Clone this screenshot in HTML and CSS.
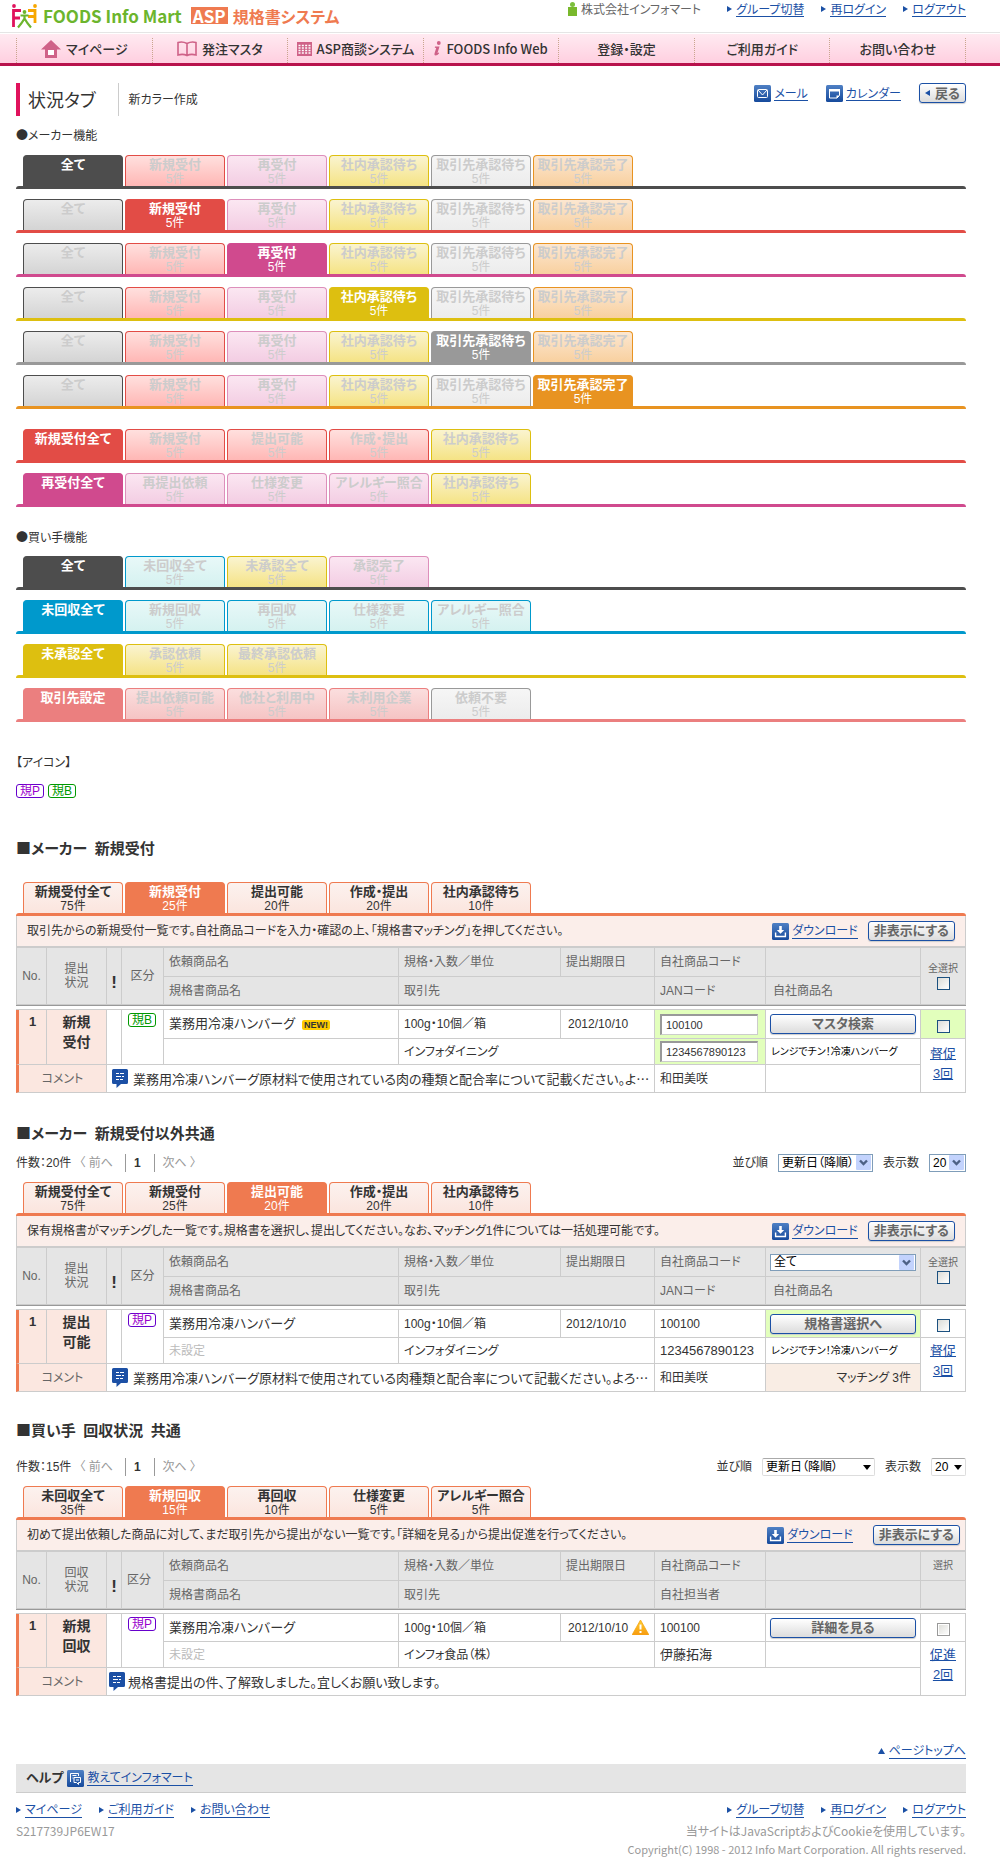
FILE: index.html
```
<!DOCTYPE html>
<html lang="ja">
<head>
<meta charset="utf-8">
<meta name="viewport" content="width=device-width, initial-scale=1">
<title>状況タブ | FOODS Info Mart ASP規格書システム</title>
<link rel="stylesheet" href="styles.css">
</head>
<body>
<svg class="defs" width="0" height="0" aria-hidden="true">
  <defs>
    <linearGradient id="blue" x1="0" y1="0" x2="0" y2="1"><stop offset="0" stop-color="#4f80c4"/><stop offset="1" stop-color="#164a9c"/></linearGradient>
    <linearGradient id="amber" x1="0" y1="0" x2="0" y2="1"><stop offset="0" stop-color="#ffd02e"/><stop offset="1" stop-color="#f79a10"/></linearGradient>
    <symbol id="i-download" viewBox="0 0 17 17"><rect width="17" height="17" rx="1.5" fill="url(#blue)"/><path d="M7.2 3h2.6v4h2.4L8.5 10.8 4.8 7h2.4z" fill="#fff"/><path d="M3.6 9.5v4h9.800v-4" fill="none" stroke="#fff" stroke-width="1.4"/></symbol>
    <symbol id="i-comment" viewBox="0 0 16 19"><path d="M0 1.500Q0 0 1.500 0h13Q16 0 16 1.500v12Q16 15 14.500 15H9l-4.500 4V15h-3Q0 15 0 13.500z" fill="#1c50a5"/><path d="M4 4.500h3M8 4.500h4M4 7.500h5M10 7.500h2M4 10.500h3M8 10.500h3" stroke="#fff"/></symbol>
    <symbol id="i-arrow" viewBox="0 0 5 6"><path d="M0 0l5 3-5 3z" fill="#1b50a5"/></symbol>
    <symbol id="i-chevron" viewBox="0 0 15 15"><rect width="15" height="15" rx="1" fill="#c3d3fd"/><path d="M4 5.500l3.500 3.500L11 5.500" fill="none" stroke="#4d6185" stroke-width="2.400"/></symbol>
    <symbol id="i-caret" viewBox="0 0 15 15"><path d="M5 6h8l-4 5z" fill="#000"/></symbol>
  </defs>
</svg>

<header class="site-header">
  <a class="logo" href="#">
    <svg width="27" height="26" viewBox="0 0 27 26" aria-hidden="true">
      <g fill="none" stroke-width="2.800">
        <path d="M10 7.500H2.500V24M2.500 15H9" stroke="#e0125c"/>
        <path d="M17 7.500h7V20M24 13.500h-7" stroke="#f7a700"/>
        <path d="M13.500 13v3.500M13.500 15.500Q11 20 7 24.500M13.500 15.500Q16 20 20 24.500M9.500 12.500h8" stroke="#6cb52d" stroke-width="2.200"/>
      </g>
      <circle cx="3" cy="3" r="1.900" fill="#e0125c"/><circle cx="24" cy="3" r="1.900" fill="#f7a700"/><circle cx="13.500" cy="9" r="1.900" fill="#6cb52d"/>
    </svg>
    <span class="logo-name">FOODS Info Mart</span>
    <span class="logo-asp">ASP</span>
    <span class="logo-system">規格書システム</span>
  </a>
  <div class="account">
    <span class="company"><svg width="9" height="14" viewBox="0 0 9 14" aria-hidden="true"><circle cx="4.500" cy="2.500" r="2.500" fill="#7cbf3c"/><path d="M0 5h9v9H0z" fill="#79b82c"/></svg>株式会社インフォマート</span>
    <a class="arrow-link" href="#"><svg width="5" height="6"><use href="#i-arrow"/></svg><span>グループ切替</span></a>
    <a class="arrow-link" href="#"><svg width="5" height="6"><use href="#i-arrow"/></svg><span>再ログイン</span></a>
    <a class="arrow-link" href="#"><svg width="5" height="6"><use href="#i-arrow"/></svg><span>ログアウト</span></a>
  </div>
</header>

<nav class="global-nav">
  <a href="#"><svg width="20" height="18" viewBox="0 0 20 18" aria-hidden="true"><path d="M10 0l10 9.500h-4V18H4V9.500H0z" fill="#cf6288"/><path d="M7 10h6v5H7z" fill="#fff"/></svg>マイページ</a>
  <a href="#"><svg width="20" height="16" viewBox="0 0 20 16" aria-hidden="true"><path d="M10 2.500Q5.500 0 1 1.500v12.500Q6 12.500 10 14.500 14 12.500 19 14V1.500Q14.500 0 10 2.500zV14.500" fill="none" stroke="#cf6288" stroke-width="1.600"/></svg>発注マスタ</a>
  <a href="#"><svg width="15" height="14" viewBox="0 0 15 14" aria-hidden="true"><path d="M0 0h15v14H0z" fill="#cf6288"/><path d="M1.500 3.500h12M1.500 6h12M1.500 8.500h12M1.500 11h12" stroke="#fff" stroke-width="1.500" stroke-dasharray="2 1.330"/></svg>ASP商談システム</a>
  <a href="#"><svg width="7" height="15" viewBox="0 0 7 15" aria-hidden="true"><circle cx="4.800" cy="2" r="1.900" fill="#cf6288"/><path d="M1 5.500h4.500L3.500 12l1.500-.5v1Q3.500 14.500 1.500 14.500 0 14.500.5 12.500L2.200 7 .8 6.800z" fill="#cf6288"/></svg>FOODS Info Web</a>
  <a href="#">登録・設定</a>
  <a href="#">ご利用ガイド</a>
  <a href="#">お問い合わせ</a>
</nav>

<main>
  <div class="page-title">
    <h1>状況タブ</h1>
    <p>新カラー作成</p>
    <div class="tools">
      <a class="icon-link" href="#"><svg width="17" height="17" viewBox="0 0 17 17" aria-hidden="true"><rect width="17" height="17" rx="1.500" fill="url(#blue)"/><rect x="3.500" y="4.500" width="10" height="8" rx="1" fill="none" stroke="#fff"/><path d="M4 5l4.500 5L13 5" fill="none" stroke="#fff"/></svg><span>メール</span></a>
      <a class="icon-link" href="#"><svg width="17" height="17" viewBox="0 0 17 17" aria-hidden="true"><rect width="17" height="17" rx="1.500" fill="url(#blue)"/><path d="M3.500 4.500h10v6l-2.500 2.500H3.500z" fill="none" stroke="#fff"/><path d="M3 4h11v2.500H3zM10.500 10.500h3l-3 3z" fill="#fff"/></svg><span>カレンダー</span></a>
      <button class="btn btn-back" type="button"><svg width="5" height="6" viewBox="0 0 5 6" aria-hidden="true"><path d="M5 0L0 3l5 3z" fill="#1b50a5"/></svg>戻る</button>
    </div>
  </div>

  <p class="label">●メーカー機能</p>
  <div class="tab-group">
    <div class="tabs dark"><a class="tab dark on" href="#"><b>全て</b></a><a class="tab red" href="#"><b>新規受付</b>5件</a><a class="tab pink" href="#"><b>再受付</b>5件</a><a class="tab gold" href="#"><b>社内承認待ち</b>5件</a><a class="tab grey" href="#"><b>取引先承認待ち</b>5件</a><a class="tab orange" href="#"><b>取引先承認完了</b>5件</a></div>
    <div class="tabs red"><a class="tab dark" href="#"><b>全て</b></a><a class="tab red on" href="#"><b>新規受付</b>5件</a><a class="tab pink" href="#"><b>再受付</b>5件</a><a class="tab gold" href="#"><b>社内承認待ち</b>5件</a><a class="tab grey" href="#"><b>取引先承認待ち</b>5件</a><a class="tab orange" href="#"><b>取引先承認完了</b>5件</a></div>
    <div class="tabs pink"><a class="tab dark" href="#"><b>全て</b></a><a class="tab red" href="#"><b>新規受付</b>5件</a><a class="tab pink on" href="#"><b>再受付</b>5件</a><a class="tab gold" href="#"><b>社内承認待ち</b>5件</a><a class="tab grey" href="#"><b>取引先承認待ち</b>5件</a><a class="tab orange" href="#"><b>取引先承認完了</b>5件</a></div>
    <div class="tabs gold"><a class="tab dark" href="#"><b>全て</b></a><a class="tab red" href="#"><b>新規受付</b>5件</a><a class="tab pink" href="#"><b>再受付</b>5件</a><a class="tab gold on" href="#"><b>社内承認待ち</b>5件</a><a class="tab grey" href="#"><b>取引先承認待ち</b>5件</a><a class="tab orange" href="#"><b>取引先承認完了</b>5件</a></div>
    <div class="tabs grey"><a class="tab dark" href="#"><b>全て</b></a><a class="tab red" href="#"><b>新規受付</b>5件</a><a class="tab pink" href="#"><b>再受付</b>5件</a><a class="tab gold" href="#"><b>社内承認待ち</b>5件</a><a class="tab grey on" href="#"><b>取引先承認待ち</b>5件</a><a class="tab orange" href="#"><b>取引先承認完了</b>5件</a></div>
    <div class="tabs orange"><a class="tab dark" href="#"><b>全て</b></a><a class="tab red" href="#"><b>新規受付</b>5件</a><a class="tab pink" href="#"><b>再受付</b>5件</a><a class="tab gold" href="#"><b>社内承認待ち</b>5件</a><a class="tab grey" href="#"><b>取引先承認待ち</b>5件</a><a class="tab orange on" href="#"><b>取引先承認完了</b>5件</a></div>
  </div>
  <div class="tab-group sub-group">
    <div class="tabs red"><a class="tab red on" href="#"><b>新規受付全て</b></a><a class="tab red" href="#"><b>新規受付</b>5件</a><a class="tab red" href="#"><b>提出可能</b>5件</a><a class="tab red" href="#"><b>作成・提出</b>5件</a><a class="tab gold" href="#"><b>社内承認待ち</b>5件</a></div>
    <div class="tabs pink"><a class="tab pink on" href="#"><b>再受付全て</b></a><a class="tab pink" href="#"><b>再提出依頼</b>5件</a><a class="tab pink" href="#"><b>仕様変更</b>5件</a><a class="tab pink" href="#"><b>アレルギー照合</b>5件</a><a class="tab gold" href="#"><b>社内承認待ち</b>5件</a></div>
  </div>

  <p class="label label-buyer">●買い手機能</p>
  <div class="tab-group">
    <div class="tabs dark"><a class="tab dark on" href="#"><b>全て</b></a><a class="tab blue" href="#"><b>未回収全て</b>5件</a><a class="tab gold" href="#"><b>未承認全て</b>5件</a><a class="tab pink" href="#"><b>承認完了</b>5件</a></div>
    <div class="tabs blue"><a class="tab blue on" href="#"><b>未回収全て</b></a><a class="tab blue" href="#"><b>新規回収</b>5件</a><a class="tab blue" href="#"><b>再回収</b>5件</a><a class="tab blue" href="#"><b>仕様変更</b>5件</a><a class="tab blue" href="#"><b>アレルギー照合</b>5件</a></div>
    <div class="tabs gold"><a class="tab gold on" href="#"><b>未承認全て</b></a><a class="tab gold" href="#"><b>承認依頼</b>5件</a><a class="tab gold" href="#"><b>最終承認依頼</b>5件</a></div>
    <div class="tabs coral"><a class="tab coral on" href="#"><b>取引先設定</b></a><a class="tab coral" href="#"><b>提出依頼可能</b>5件</a><a class="tab coral" href="#"><b>他社と利用中</b>5件</a><a class="tab coral" href="#"><b>未利用企業</b>5件</a><a class="tab grey" href="#"><b>依頼不要</b>5件</a></div>
  </div>

  <p class="label label-icons">【アイコン】</p>
  <div class="badges"><span class="badge badge-p">規P</span><span class="badge badge-b">規B</span></div>

  <section class="list first">
    <h2>■メーカー&ensp;新規受付</h2>
    <div class="tabs main"><a class="tab main" href="#"><b>新規受付全て</b>75件</a><a class="tab main on" href="#"><b>新規受付</b>25件</a><a class="tab main" href="#"><b>提出可能</b>20件</a><a class="tab main" href="#"><b>作成・提出</b>20件</a><a class="tab main" href="#"><b>社内承認待ち</b>10件</a></div>
    <div class="notice">
      <p>取引先からの新規受付一覧です。自社商品コードを入力・確認の上、「規格書マッチング」を押してください。</p>
      <a class="icon-link" href="#"><svg width="17" height="17"><use href="#i-download"/></svg><span>ダウンロード</span></a>
      <button class="btn" type="button">非表示にする</button>
    </div>
    <table>
      <colgroup><col class="c-no"><col class="c-status"><col class="c-mark"><col class="c-kind"><col><col class="c-spec"><col class="c-date"><col class="c-code"><col class="c-action"><col class="c-select"></colgroup>
      <thead>
        <tr><th rowspan="2" class="center">No.</th><th rowspan="2" class="center">提出<br>状況</th><th rowspan="2" class="mark">!</th><th rowspan="2" class="center">区分</th><th>依頼商品名</th><th>規格・入数／単位</th><th>提出期限日</th><th>自社商品コード</th><th></th><th rowspan="2" class="select-all"><label>全選択<input type="checkbox"></label></th></tr>
        <tr class="last"><th>規格書商品名</th><th colspan="2">取引先</th><th>JANコード</th><th class="own-name">自社商品名</th></tr>
      </thead>
      <tbody>
        <tr class="spacer"><td colspan="10"></td></tr>
        <tr class="row-a"><td rowspan="2" class="no">1</td><td rowspan="2" class="status">新規<br>受付</td><td rowspan="2"></td><td rowspan="2" class="kind"><span class="badge badge-b">規B</span></td><td>業務用冷凍ハンバーグ<span class="new">NEW!</span></td><td class="small">100g・10個／箱</td><td class="small date">2012/10/10</td><td class="edit"><input type="text" value="100100" aria-label="自社商品コード"></td><td class="action"><button class="btn btn-wide" type="button">マスタ検索</button></td><td class="pick edit"><input type="checkbox" aria-label="選択"></td></tr>
        <tr><td></td><td colspan="2" class="small">インフォダイニング</td><td class="edit"><input type="text" value="1234567890123" aria-label="JANコード"></td><td class="own">レンジでチン！冷凍ハンバーグ</td><td rowspan="2" class="remind"><a href="#">督促<br>3回</a></td></tr>
        <tr class="row-c"><td colspan="2" class="comment-head">コメント</td><td colspan="5" class="comment"><div><svg width="16" height="19"><use href="#i-comment"/></svg>業務用冷凍ハンバーグ原材料で使用されている肉の種類と配合率について記載ください。よ…</div></td><td class="small">和田美咲</td><td></td></tr>
      </tbody>
    </table>
  </section>

  <section class="list second">
    <h2>■メーカー&ensp;新規受付以外共通</h2>
    <div class="pager">
      <span>件数：20件</span><span class="move">〈 前へ</span><b>1</b><span class="move">次へ 〉</span>
      <div class="sorting">
        <label for="sort-a">並び順</label><span class="select w-sort"><select id="sort-a"><option>更新日（降順）</option></select><svg width="15" height="15"><use href="#i-chevron"/></svg></span>
        <label for="size-a">表示数</label><span class="select w-size"><select id="size-a"><option>20</option></select><svg width="15" height="15"><use href="#i-chevron"/></svg></span>
      </div>
    </div>
    <div class="tabs main"><a class="tab main" href="#"><b>新規受付全て</b>75件</a><a class="tab main" href="#"><b>新規受付</b>25件</a><a class="tab main on" href="#"><b>提出可能</b>20件</a><a class="tab main" href="#"><b>作成・提出</b>20件</a><a class="tab main" href="#"><b>社内承認待ち</b>10件</a></div>
    <div class="notice">
      <p>保有規格書がマッチングした一覧です。規格書を選択し、提出してください。なお、マッチング1件については一括処理可能です。</p>
      <a class="icon-link" href="#"><svg width="17" height="17"><use href="#i-download"/></svg><span>ダウンロード</span></a>
      <button class="btn" type="button">非表示にする</button>
    </div>
    <table>
      <colgroup><col class="c-no"><col class="c-status"><col class="c-mark"><col class="c-kind"><col><col class="c-spec"><col class="c-date"><col class="c-code"><col class="c-action"><col class="c-select"></colgroup>
      <thead>
        <tr><th rowspan="2" class="center">No.</th><th rowspan="2" class="center">提出<br>状況</th><th rowspan="2" class="mark">!</th><th rowspan="2" class="center">区分</th><th>依頼商品名</th><th>規格・入数／単位</th><th>提出期限日</th><th>自社商品コード</th><th class="action"><span class="select w-filter"><select aria-label="絞り込み"><option>全て</option></select><svg width="15" height="15"><use href="#i-chevron"/></svg></span></th><th rowspan="2" class="select-all raised"><label>全選択<input type="checkbox"></label></th></tr>
        <tr class="last"><th>規格書商品名</th><th colspan="2">取引先</th><th>JANコード</th><th class="own-name">自社商品名</th></tr>
      </thead>
      <tbody>
        <tr class="spacer"><td colspan="10"></td></tr>
        <tr class="row-a"><td rowspan="2" class="no">1</td><td rowspan="2" class="status">提出<br>可能</td><td rowspan="2"></td><td rowspan="2" class="kind"><span class="badge badge-p">規P</span></td><td>業務用冷凍ハンバーグ</td><td class="small">100g・10個／箱</td><td class="small">2012/10/10</td><td class="small">100100</td><td class="action edit"><button class="btn btn-wide" type="button">規格書選択へ</button></td><td class="pick"><input type="checkbox" aria-label="選択"></td></tr>
        <tr><td class="unset">未設定</td><td colspan="2" class="small">インフォダイニング</td><td>1234567890123</td><td class="own">レンジでチン！冷凍ハンバーグ</td><td rowspan="2" class="remind"><a href="#">督促<br>3回</a></td></tr>
        <tr class="row-c"><td colspan="2" class="comment-head">コメント</td><td colspan="5" class="comment"><div><svg width="16" height="19"><use href="#i-comment"/></svg>業務用冷凍ハンバーグ原材料で使用されている肉種類と配合率について記載ください。よろ…</div></td><td class="small">和田美咲</td><td class="matching">マッチング 3件</td></tr>
      </tbody>
    </table>
  </section>

  <section class="list third">
    <h2>■買い手&ensp;回収状況&ensp;共通</h2>
    <div class="pager">
      <span>件数：15件</span><span class="move">〈 前へ</span><b>1</b><span class="move">次へ 〉</span>
      <div class="sorting">
        <label for="sort-b">並び順</label><span class="select plain w-sort"><select id="sort-b"><option>更新日（降順）</option></select><svg width="15" height="15"><use href="#i-caret"/></svg></span>
        <label for="size-b">表示数</label><span class="select plain w-size"><select id="size-b"><option>20</option></select><svg width="15" height="15"><use href="#i-caret"/></svg></span>
      </div>
    </div>
    <div class="tabs main"><a class="tab main" href="#"><b>未回収全て</b>35件</a><a class="tab main on" href="#"><b>新規回収</b>15件</a><a class="tab main" href="#"><b>再回収</b>10件</a><a class="tab main" href="#"><b>仕様変更</b>5件</a><a class="tab main" href="#"><b>アレルギー照合</b>5件</a></div>
    <div class="notice">
      <p>初めて提出依頼した商品に対して、まだ取引先から提出がない一覧です。「詳細を見る」から提出促進を行ってください。</p>
      <a class="icon-link" href="#"><svg width="17" height="17"><use href="#i-download"/></svg><span>ダウンロード</span></a>
      <button class="btn" type="button">非表示にする</button>
    </div>
    <table>
      <colgroup><col class="c-no"><col class="c-status"><col class="c-mark"><col class="c-kind"><col><col class="c-spec"><col class="c-date"><col class="c-code"><col class="c-action"><col class="c-select"></colgroup>
      <thead>
        <tr><th rowspan="2" class="center">No.</th><th rowspan="2" class="center">回収<br>状況</th><th rowspan="2" class="mark">!</th><th rowspan="2">区分</th><th>依頼商品名</th><th>規格・入数／単位</th><th>提出期限日</th><th>自社商品コード</th><th></th><th class="select-one">選択</th></tr>
        <tr class="last"><th>規格書商品名</th><th colspan="2">取引先</th><th>自社担当者</th><th></th><th></th></tr>
      </thead>
      <tbody>
        <tr class="spacer"><td colspan="10"></td></tr>
        <tr class="row-a"><td rowspan="2" class="no">1</td><td rowspan="2" class="status">新規<br>回収</td><td rowspan="2"></td><td rowspan="2" class="kind"><span class="badge badge-p">規P</span></td><td>業務用冷凍ハンバーグ</td><td class="small">100g・10個／箱</td><td class="small date">2012/10/10<svg class="warn" width="17" height="15" viewBox="0 0 17 15"><path d="M8.500 0L17 15H0z" fill="url(#amber)" stroke="#f5a615" stroke-linejoin="round" stroke-width=".8"/><path d="M8.500 4.500v5M8.500 11v2" stroke="#fff" stroke-width="2"/></svg></td><td class="small">100100</td><td class="action"><button class="btn btn-wide" type="button">詳細を見る</button></td><td class="pick muted"><input type="checkbox" aria-label="選択"></td></tr>
        <tr><td class="unset">未設定</td><td colspan="2" class="small">インフォ食品（株）</td><td>伊藤拓海</td><td></td><td rowspan="2" class="remind"><a href="#">促進<br>2回</a></td></tr>
        <tr class="row-c"><td colspan="2" class="comment-head">コメント</td><td colspan="7" class="comment snug"><div><svg width="16" height="19"><use href="#i-comment"/></svg>規格書提出の件、了解致しました。宜しくお願い致します。</div></td></tr>
      </tbody>
    </table>
  </section>
</main>

<footer>
  <p class="to-top"><a class="arrow-link" href="#"><svg width="7" height="6" viewBox="0 0 7 6" aria-hidden="true"><path d="M3.500 0L7 6H0z" fill="#1b50a5"/></svg><span>ページトップへ</span></a></p>
  <div class="help"><b>ヘルプ</b><a class="icon-link" href="#"><svg width="17" height="17" viewBox="0 0 17 17" aria-hidden="true"><rect width="17" height="17" rx="1.500" fill="url(#blue)"/><path d="M3.500 12V3.500h8V6M5.500 5.500h4M5.500 8h1M7 7.500h6.500v5h-2v2l-2-2H7z" fill="none" stroke="#fff"/><path d="M9 10h3" stroke="#fff"/></svg><span>教えてインフォマート</span></a></div>
  <div class="foot-links">
    <a class="arrow-link" href="#"><svg width="5" height="6"><use href="#i-arrow"/></svg><span>マイページ</span></a>
    <a class="arrow-link" href="#"><svg width="5" height="6"><use href="#i-arrow"/></svg><span>ご利用ガイド</span></a>
    <a class="arrow-link" href="#"><svg width="5" height="6"><use href="#i-arrow"/></svg><span>お問い合わせ</span></a>
    <a class="arrow-link push" href="#"><svg width="5" height="6"><use href="#i-arrow"/></svg><span>グループ切替</span></a>
    <a class="arrow-link" href="#"><svg width="5" height="6"><use href="#i-arrow"/></svg><span>再ログイン</span></a>
    <a class="arrow-link" href="#"><svg width="5" height="6"><use href="#i-arrow"/></svg><span>ログアウト</span></a>
  </div>
  <div class="foot-note"><span>S217739JP6EW17</span><div><p>当サイトはJavaScriptおよびCookieを使用しています。</p><p class="copyright">Copyright(C) 1998 - 2012 Info Mart Corporation. All rights reserved.</p></div></div>
</footer>
</body>
</html>
```
FILE: styles.css
```
* { box-sizing: border-box; }

body {
  margin: 0;
  background: #fff;
  color: #333;
  font-family: "Liberation Sans", "Noto Sans CJK JP", sans-serif;
  font-size: 12px;
  line-height: 16px;
  font-feature-settings: "palt";
}

h1, h2, p { margin: 0; font-weight: normal; }
svg { flex: none; }
a { color: #1b50a5; }
button, input, select { font: inherit; font-feature-settings: inherit; margin: 0; }
.defs { display: block; height: 0; }

/* header */
.site-header {
  display: flex;
  justify-content: space-between;
  height: 33px;
  padding: 0 34px 0 11px;
  border-bottom: 1px solid #e5e5e5;
}
.logo, .account, .global-nav, .page-title, .label, .list h2, .comment, .foot-note { font-family: "Noto Sans CJK JP", "Noto Sans", sans-serif; }
.logo { display: flex; align-items: center; gap: 5px; height: 31px; text-decoration: none; font-weight: bold; }
.logo-name { color: #6cb52d; font-size: 17px; }
.logo-asp { margin-left: 4px; padding: 0 2px; background: #ef7a50; color: #fff; font-size: 17px; line-height: 17px; }
.logo-system { color: #ef7a50; font-size: 16px; }
.account { display: flex; gap: 17px; height: 18px; align-items: center; }
.company { display: flex; align-items: center; gap: 4px; margin-right: 9px; color: #666; }

.arrow-link { display: inline-flex; align-items: center; gap: 4px; text-decoration: none; }
.arrow-link span, .icon-link span { border-bottom: 1px solid #1b50a5; line-height: 14px; }
.icon-link { display: inline-flex; align-items: center; gap: 3px; text-decoration: none; white-space: nowrap; }

/* global navigation */
.global-nav {
  display: flex;
  height: 32px;
  margin-top: 1px;
  padding: 0 34px 0 16px;
  background: linear-gradient(#ffeaf1, #ffcfe0);
  border-bottom: 3px solid #b8124c;
}
.global-nav a {
  flex: 1;
  display: flex;
  align-items: center;
  justify-content: center;
  gap: 5px;
  margin-top: 4px;
  padding-bottom: 4px;
  border-left: 1px dotted #c9a58e;
  color: #333;
  font-size: 13px;
  font-weight: 500;
  text-decoration: none;
  white-space: nowrap;
}
.global-nav a:last-child { border-right: 1px dotted #c9a58e; }

main { padding: 0 34px 0 16px; }

/* page title */
.page-title { display: flex; height: 33px; margin-top: 17px; border-left: 4px solid #e0125c; }
.page-title h1 { padding: 0 22px 0 8px; border-right: 1px solid #ccc; font-size: 18px; line-height: 32px; }
.page-title p { padding-left: 10px; line-height: 32px; }
.tools { display: flex; gap: 18px; height: 20px; margin-left: auto; align-items: center; }

.btn {
  height: 20px;
  padding: 0 5px;
  border: 1px solid #1b50a5;
  border-radius: 3px;
  background: linear-gradient(#fff, #dcdcdc);
  box-shadow: 0 1px 1px #ccc;
  color: #666;
  font-weight: bold;
  font-size: 13px;
  line-height: 16px;
  white-space: nowrap;
}
.btn-back { display: flex; align-items: center; gap: 5px; }
.btn-wide { display: block; width: 100%; }

.label { margin: 11px 0 12px; }
.label-buyer { margin: 22px 0 11px; }
.label-icons { margin: 32px 0 14px; }

/* tabs */
.dark { --solid: #4d4d4d; --line: #4d4d4d; --from: #ececec; --to: #d4d4d4; }
.red { --solid: #e24c46; --line: #e24c46; --from: #ffe0de; --to: #ffb7b5; }
.pink { --solid: #d04a8e; --line: #dd8fbb; --from: #fbe7f2; --to: #f3cde3; }
.gold { --solid: #ddbf10; --line: #ddbf10; --from: #faf4d0; --to: #f5e385; }
.grey { --solid: #999; --line: #999; --from: #f6f6f6; --to: #ececec; }
.orange { --solid: #e89321; --line: #e89321; --from: #fce7d1; --to: #f8d09f; }
.blue { --solid: #09c; --line: #09c; --from: #e8f8f8; --to: #d5f2f0; }
.coral { --solid: #eb7f7f; --line: #eb7f7f; --from: #fbdede; --to: #f5c4c4; }
.main { --solid: #ef7a50; --line: #ef7a50; --from: #fcf2ef; --to: #fbe5de; }

.tab-group { display: flex; flex-direction: column; gap: 10px; }
.sub-group { margin-top: 20px; }
.tabs { display: flex; flex-wrap: wrap; gap: 0 2px; padding-left: 7px; }
.tabs::after {
  content: "";
  flex: 0 0 calc(100% + 7px);
  height: 3px;
  margin-left: -7px;
  border-radius: 3px 3px 0 0;
  background: var(--solid);
}
.tab {
  width: 100px;
  height: 31px;
  padding-top: 2px;
  border: 1px solid var(--line);
  border-bottom: 0;
  border-radius: 4px 4px 0 0;
  background: linear-gradient(var(--from), var(--to));
  color: #ccc;
  line-height: 14px;
  text-align: center;
  text-decoration: none;
  white-space: nowrap;
}
.tab b { display: block; font-size: 13px; }
.tab.on { background: var(--solid); border-color: var(--solid); color: #fff; }
.tab.main { color: #333; }
.tab.main.on { color: #fff; }

/* badges */
.badges { display: flex; gap: 4px; }
.badge { display: block; width: 28px; height: 14px; border: 1px solid; border-radius: 3px; font-size: 12px; line-height: 13px; text-align: center; }
.badge-p { border-color: #60c; color: #90c; }
.badge-b { border-color: #090; color: #090; }
.new { margin-left: 7px; padding: 0 2px; border-radius: 2px; background: #fc0; font-size: 9px; font-weight: bold; }

/* lists */
.list h2 { font-size: 15px; font-weight: bold; line-height: 20px; }
.first { margin-top: 40px; }
.first h2 { margin-bottom: 24px; }
.second { margin-top: 30px; }
.second h2 { margin-bottom: 11px; }
.third { margin-top: 28px; }
.third h2 { margin-bottom: 18px; }

.pager { display: flex; align-items: center; height: 18px; margin-bottom: 10px; }
.pager .move { margin: 0 12px 0 8px; color: #999; }
.pager b { padding: 0 13px 0 8px; border: solid #999; border-width: 0 1px; line-height: 18px; }
.sorting { display: flex; align-items: center; gap: 10px; margin-left: auto; }

.select { position: relative; display: block; }
.select select { display: block; width: 100%; height: 18px; padding: 0 16px 0 3px; border: 1px solid #7f9db9; border-radius: 0; background: #fff; color: #000; line-height: 16px; appearance: none; }
.select svg { position: absolute; right: 2px; top: 1px; pointer-events: none; }
.select.plain select { padding-right: 12px; border-color: #aaa #ddd #ddd; border-radius: 2px; }
.w-sort { width: 95px; }
.w-sort.plain { width: 113px; }
.w-size { width: 37px; }
.w-size.plain { width: 35px; }
.w-filter select { height: 17px; line-height: 14px; }

.notice {
  display: flex;
  align-items: center;
  gap: 10px;
  height: 32px;
  padding: 0 10px;
  background: #fbeeea;
  border: solid #ccc;
  border-width: 0 1px 2px;
}
.notice p { flex: 1; }
.third .notice { gap: 20px; padding-right: 5px; }

table { width: 100%; table-layout: fixed; border-collapse: separate; border-spacing: 0; }
.c-no { width: 31px; }
.c-status { width: 60px; }
.c-mark { width: 15px; }
.c-kind { width: 42px; }
.c-spec { width: 162px; }
.c-date { width: 94px; }
.c-code { width: 111px; }
.c-action { width: 155px; }
.c-select { width: 45px; }

th, td { height: 26px; padding: 0 5px; border: solid #ccc; border-width: 0 1px 1px 0; text-align: left; }
th { height: 29px; background: #e5e5e5; color: #666; font-weight: normal; line-height: 14px; }
tr.last th { height: 28px; }
th:first-child { border-left-width: 1px; }
tr.last th:first-child { border-left-width: 0; }
th.center { padding: 0; text-align: center; }
th.mark { padding: 14px 0 0; color: #333; font-size: 17px; font-weight: 900; text-align: center; }
th.own-name { padding-left: 7px; }
.select-all, .select-one { padding: 0; font-size: 10px; text-align: center; }
.select-all.raised { padding-bottom: 12px; }
.select-all label { display: block; line-height: 12px; }
.select-all input { display: block; margin: 2px auto 0; }

.spacer td { height: 5px; padding: 0; border-width: 1px 0; border-color: #999 #ccc #ccc; }
.spacer + tr td { height: 28px; }
.first .spacer + tr td { height: 29px; }
td { font-size: 13px; }
td.small { font-size: 12px; }
td.edit { background: #e2ffbc; }
td.date { padding: 0 0 0 7px; white-space: nowrap; }
.date .warn { margin: -2px 0 0 4px; vertical-align: middle; }
.no, .status { padding: 2px 0 0; border-bottom-color: #ccc; background: #fbe7e0; font-weight: bold; line-height: 20px; text-align: center; vertical-align: top; }
.status { font-size: 14px; }
.no, .comment-head { border-left: 3px solid #ef7a50; }
.kind { padding: 3px 0 0 6px; vertical-align: top; }
.row-c td { height: 28px; }
td.comment-head { background: #fbe7e0; color: #666; font-size: 12px; text-align: center; }
.comment div { display: flex; align-items: center; gap: 5px; white-space: nowrap; }
td.comment { overflow: hidden; }
td.comment.snug { padding-left: 2px; }
.comment.snug div { gap: 3px; }
td.unset { color: #bbb; font-size: 12px; }
td.own { color: #000; font-size: 10px; }
th.action, td.action { padding: 0 4px; }
td.matching { padding-right: 9px; background: #f9ede4; font-size: 12px; text-align: right; }
.pick, .remind { padding: 0; text-align: center; }
.remind { padding-bottom: 4px; line-height: 20px; }
.second .remind, .third .remind { padding-bottom: 8px; }

input[type="text"] { display: block; width: 98px; height: 21px; padding: 0 4px; border: solid #999; border-width: 2px 1px 1px 2px; border-right-color: #ccc; border-bottom-color: #ccc; background: #fff; color: #333; font-size: 11px; }
input[type="checkbox"] { width: 13px; height: 13px; border: 1px solid #1c5180; background: linear-gradient(135deg, #dcdcd7, #fff); appearance: none; }
.pick input { display: block; margin: 4px auto 0; }
.muted input[type="checkbox"] { border-color: #999; box-shadow: inset 0 0 0 1px #fff; }

/* footer */
footer { padding: 0 34px 1px 16px; }
.to-top { margin: 46px 0 6px; text-align: right; line-height: 16px; height: 16px; }
.help { display: flex; align-items: center; gap: 4px; height: 29px; padding-left: 10px; border-bottom: 1px solid #ccc; background: #e5e5e5; }
.help b { font-size: 13px; }
.foot-links { display: flex; gap: 17px; height: 16px; margin: 9px 0 4px; }
.foot-links .push { margin-left: auto; }
.foot-note { display: flex; justify-content: space-between; color: #999; line-height: 18px; }
.foot-note p { text-align: right; }
.foot-note .copyright { font-size: 11px; }
```
